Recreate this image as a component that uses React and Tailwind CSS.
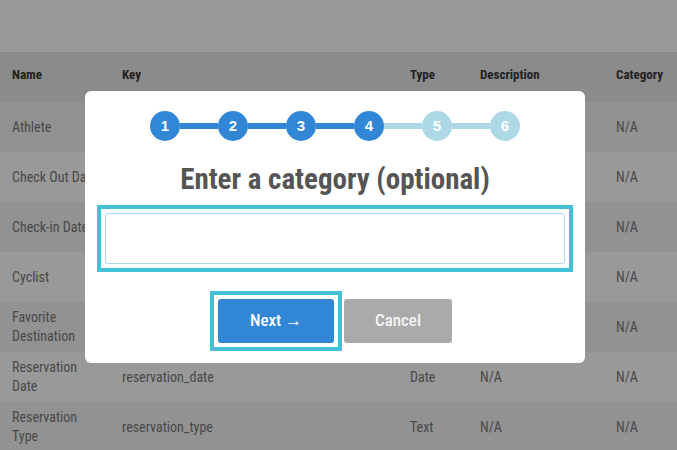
const rows = [
  { name: 'Athlete', key: 'athlete', type: 'Text' },
  { name: 'Check Out Date', key: 'check_out_date', type: 'Date' },
  { name: 'Check-in Date', key: 'check_in_date', type: 'Date' },
  { name: 'Cyclist', key: 'cyclist', type: 'Text' },
  { name: 'Favorite Destination', key: 'favorite_destination', type: 'Text' },
  { name: 'Reservation Date', key: 'reservation_date', type: 'Date' },
  { name: 'Reservation Type', key: 'reservation_type', type: 'Text' },
]

const font = { fontFamily: '"Roboto Condensed", Roboto, sans-serif' }

function Stepper({ current, total }) {
  const steps = Array.from({ length: total }, (_, i) => i + 1)
  return (
    <div className="flex items-center justify-center">
      {steps.map((n) => (
        <div key={n} className="flex items-center">
          {n > 1 && (
            <div className={`h-[6px] w-[38px] ${n <= current ? 'bg-[#3186d6]' : 'bg-[#add8e6]'}`} />
          )}
          <div
            className={`flex h-[30px] w-[30px] items-center justify-center rounded-full text-[15px] font-bold text-white ${
              n <= current ? 'bg-[#3186d6]' : 'bg-[#add8e6]'
            }`}
            style={{ fontFamily: '"Liberation Sans", Arial, sans-serif' }}
          >
            {n}
          </div>
        </div>
      ))}
    </div>
  )
}

export default function App() {
  return (
    <div className="relative h-[450px] overflow-hidden bg-white" style={font}>
      <div className="h-[53px] border-b border-[#e3e3e3]" />
      <table className="w-full table-fixed border-collapse text-left text-[14px]">
        <colgroup>
          <col className="w-[110px]" />
          <col className="w-[288px]" />
          <col className="w-[70px]" />
          <col className="w-[136px]" />
          <col />
        </colgroup>
        <thead>
          <tr className="h-[49px] bg-[#e8e8e8] text-[13px] text-[#383838]">
            <th className="px-3 pb-[6px] font-bold">Name</th>
            <th className="px-3 pb-[6px] font-bold">Key</th>
            <th className="px-3 pb-[6px] font-bold">Type</th>
            <th className="px-3 pb-[6px] font-bold">Description</th>
            <th className="px-3 pb-[6px] font-bold">Category</th>
          </tr>
        </thead>
        <tbody className="text-[#7a7a7a]">
          {rows.map((r, i) => (
            <tr key={r.key} className={`h-[50px] leading-[19px] ${i % 2 === 0 ? 'bg-[#f3f3f3]' : 'bg-white'}`}>
              <td className="px-3">{r.name}</td>
              <td className="px-3">{r.key}</td>
              <td className="px-3">{r.type}</td>
              <td className="px-3">N/A</td>
              <td className="px-3">N/A</td>
            </tr>
          ))}
        </tbody>
      </table>

      <div className="absolute inset-0 bg-black/40">
        <div className="ml-[85px] mt-[91px] w-[500px] rounded-md bg-white px-3 pb-5 pt-5">
          <Stepper current={4} total={6} />
          <h2 className="mt-[21px] text-center text-[29px] font-bold leading-[35px] text-[#555]">
            Enter a category (optional)
          </h2>
          <div className="mt-2 border-4 border-[#45c1d6] p-1">
            <input
              type="text"
              className="block h-[51px] w-full rounded-[3px] border border-[#aed6f1] bg-white px-3 text-[16px] text-[#555] outline-none"
            />
          </div>
          <div className="mt-[27px] flex justify-center gap-[10px]">
            <div className="-m-2 border-4 border-[#45c1d6] p-1">
              <button className="block h-[44px] w-[116px] rounded-[3px] bg-[#3186d6] text-[17px] font-medium text-white">
                Next →
              </button>
            </div>
            <button className="h-[44px] w-[108px] rounded-[3px] bg-[#aaaaaa] text-[17px] font-medium text-[#f4f4f4]">
              Cancel
            </button>
          </div>
        </div>
      </div>
    </div>
  )
}
